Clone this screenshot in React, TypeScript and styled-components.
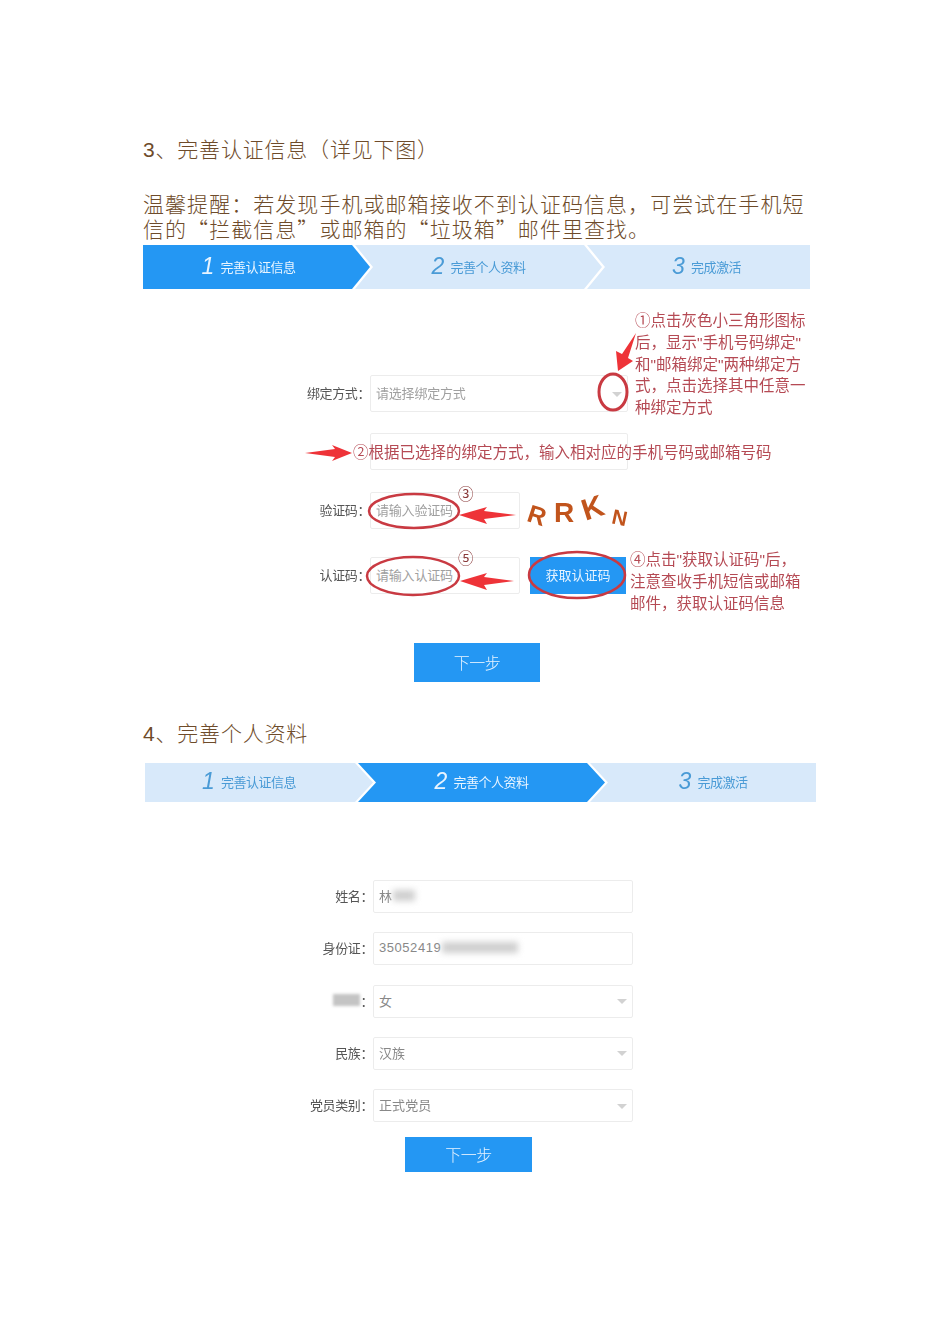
import styled, { createGlobalStyle } from "styled-components";

const GlobalStyle = createGlobalStyle`
  html, body {
    margin: 0;
    padding: 0;
    background: #fff;
  }
`;

const STEP_NAMES = ["完善认证信息", "完善个人资料", "完成激活"];

const Steps = ({
  active,
  height,
  widths,
  pads,
  left,
}: {
  active: number;
  height: number;
  widths: number[];
  pads: number[];
  left: number;
}) => (
  <SSteps $height={height} $left={left}>
    {STEP_NAMES.map((name, i) => (
      <SStep
        key={name}
        $active={i === active}
        $first={i === 0}
        $last={i === 2}
        $width={widths[i]}
        $pad={pads[i]}
      >
        <SStepNum>{i + 1}</SStepNum>
        <SStepName>{name}</SStepName>
      </SStep>
    ))}
  </SSteps>
);

export default function App() {
  return (
    <SPage>
      <GlobalStyle />
      <STitle>3、完善认证信息（详见下图）</STitle>
      <STip>
        温馨提醒：若发现手机或邮箱接收不到认证码信息，可尝试在手机短信的“拦截信息”或邮箱的“垃圾箱”邮件里查找。
      </STip>
      <Steps active={0} height={44} left={0} widths={[227, 247, 223]} pads={[-16, 0, 16]} />

      <SFigure>
        <SRow $gap={21}>
          <SLabel $width={227}>绑定方式：</SLabel>
          <SSelect $width={258} $height={37}>
            <SHolder>请选择绑定方式</SHolder>
          </SSelect>
        </SRow>
        <SRow $gap={22}>
          <SLabel $width={227} />
          <SField $width={258} $height={37} />
        </SRow>
        <SRow $gap={28}>
          <SLabel $width={227}>验证码：</SLabel>
          <SField $width={150} $height={37}>
            <SHolder>请输入验证码</SHolder>
          </SField>
          <SCaptcha>
            <SCaptchaChar $rotate={18} $y={5} $size={25}>R</SCaptchaChar>
            <SCaptchaChar $rotate={0} $y={2} $size={28}>R</SCaptchaChar>
            <SCaptchaChar $rotate={-18} $y={-3} $size={30}>K</SCaptchaChar>
            <SCaptchaChar $rotate={12} $y={7} $size={21}>N</SCaptchaChar>
          </SCaptcha>
        </SRow>
        <SRow $gap={49}>
          <SLabel $width={227}>认证码：</SLabel>
          <SField $width={150} $height={37}>
            <SHolder>请输入认证码</SHolder>
          </SField>
          <SGetCode>获取认证码</SGetCode>
        </SRow>

        <SNextFirst>下一步</SNextFirst>

        <SMarks viewBox="143 289 667 393">
          <ellipse cx="613" cy="392" rx="14" ry="18" fill="none" stroke="#c93a42" strokeWidth="3" />
          <ellipse cx="414" cy="511" rx="45" ry="17" fill="none" stroke="#c93a42" strokeWidth="2.5" />
          <ellipse cx="413" cy="576" rx="46" ry="19" fill="none" stroke="#c93a42" strokeWidth="2.5" />
          <ellipse cx="577" cy="575" rx="48" ry="23" fill="none" stroke="#c93a42" strokeWidth="2.5" />
          <path d="M636 333 L628 358 L633 361 L618 371 L616 351 L622 354 Z" fill="#ee3338" />
          <path d="M305 453 L335 449 L332 445 L352 453 L332 461 L335 457 Z" fill="#ee3338" />
          <path d="M516 515 L484 511 L487 507 L459 515 L487 524 L484 519 Z" fill="#ee3338" />
          <path d="M514 581 L484 577 L487 573 L460 581 L487 590 L484 585 Z" fill="#ee3338" />
        </SMarks>

        <SNoteOne>
          ①点击灰色小三角形图标
          <br />
          后，显示"手机号码绑定"
          <br />
          和"邮箱绑定"两种绑定方
          <br />
          式，点击选择其中任意一
          <br />
          种绑定方式
        </SNoteOne>
        <SNoteTwo>②根据已选择的绑定方式，输入相对应的手机号码或邮箱号码</SNoteTwo>
        <SNoteThree>③</SNoteThree>
        <SNoteFive>⑤</SNoteFive>
        <SNoteFour>
          ④点击"获取认证码"后，
          <br />
          注意查收手机短信或邮箱
          <br />
          邮件，获取认证码信息
        </SNoteFour>
      </SFigure>

      <STitleNext>4、完善个人资料</STitleNext>
      <Steps active={1} height={39} left={2} widths={[228, 247, 226]} pads={[-20, 0, 20]} />

      <SProfile>
        <SProfileRow>
          <SLabel $width={230}>姓名：</SLabel>
          <SField $width={260} $height={33}>
            <SValue>林</SValue>
            <SBlur $width={22} />
          </SField>
        </SProfileRow>
        <SProfileRow>
          <SLabel $width={230}>身份证：</SLabel>
          <SField $width={260} $height={33}>
            <SValue $track={0.55}>35052419</SValue>
            <SBlur $width={76} />
          </SField>
        </SProfileRow>
        <SProfileRow>
          <SLabel $width={230}>
            <SBlurLabel />：
          </SLabel>
          <SSelect $width={260} $height={33}>
            <SValue>女</SValue>
          </SSelect>
        </SProfileRow>
        <SProfileRow>
          <SLabel $width={230}>民族：</SLabel>
          <SSelect $width={260} $height={33}>
            <SValue>汉族</SValue>
          </SSelect>
        </SProfileRow>
        <SProfileRow>
          <SLabel $width={230}>党员类别：</SLabel>
          <SSelect $width={260} $height={33}>
            <SValue>正式党员</SValue>
          </SSelect>
        </SProfileRow>
        <SNextSecond>下一步</SNextSecond>
      </SProfile>
    </SPage>
  );
}

const CJK = `"Liberation Sans", "Noto Sans CJK SC", sans-serif`;

const SPage = styled.div`
  box-sizing: border-box;
  width: 950px;
  height: 1344px;
  padding: 137px 0 0 143px;
  overflow: hidden;
  background: #fff;
  font-family: ${CJK};
`;

const STitle = styled.h2`
  margin: 0;
  font-size: 21px;
  font-weight: 300;
  line-height: 25px;
  letter-spacing: 0.8px;
  color: #6e4b2a;
`;

const STitleNext = styled(STitle)`
  margin-top: 39px;
  margin-bottom: 17px;
`;

const STip = styled.p`
  width: 668px;
  margin: 29px 0 4px;
  font-family: "Noto Sans CJK SC", sans-serif;
  font-size: 21px;
  font-weight: 300;
  line-height: 25px;
  letter-spacing: 1.05px;
  color: #6e4b2a;
`;

const SSteps = styled.div<{ $height: number; $left: number }>`
  display: flex;
  height: ${(p) => p.$height}px;
  margin-left: ${(p) => p.$left}px;
  filter: blur(0.35px);
`;

const SStep = styled.div<{
  $active: boolean;
  $first: boolean;
  $last: boolean;
  $width: number;
  $pad: number;
}>`
  display: flex;
  flex: 0 0 ${(p) => p.$width}px;
  align-items: center;
  justify-content: center;
  gap: 6px;
  margin-right: -15px;
  padding-left: ${(p) => Math.max(p.$pad, 0)}px;
  padding-right: ${(p) => Math.max(-p.$pad, 0)}px;
  padding-bottom: 2px;
  box-sizing: border-box;
  background: ${(p) => (p.$active ? "#2497f3" : "#d8e9fa")};
  color: ${(p) => (p.$active ? "#e8f4ff" : "#4a9bd6")};
  clip-path: polygon(
    0 0,
    ${(p) => (p.$last ? "100% 0, 100% 100%" : "calc(100% - 18px) 0, 100% 50%, calc(100% - 18px) 100%")},
    0 100%${(p) => (p.$first ? "" : ", 18px 50%")}
  );
`;

const SStepNum = styled.span`
  font-family: "Liberation Sans", sans-serif;
  font-size: 23px;
  font-style: italic;
  line-height: 1;
`;

const SStepName = styled.span`
  font-size: 13px;
  letter-spacing: -0.5px;
  color: inherit;
`;

const SFigure = styled.div`
  position: relative;
  width: 667px;
  height: 393px;
  padding-top: 86px;
  box-sizing: border-box;
  filter: blur(0.35px);
`;

const SRow = styled.div<{ $gap: number }>`
  display: flex;
  align-items: center;
  margin-bottom: ${(p) => p.$gap}px;
`;

const SProfile = styled.div`
  padding-top: 78px;
  filter: blur(0.35px);
`;

const SProfileRow = styled.div`
  display: flex;
  align-items: center;
  margin-bottom: 19.3px;
`;

const SLabel = styled.div<{ $width?: number }>`
  display: flex;
  flex: 0 0 ${(p) => p.$width}px;
  justify-content: flex-end;
  align-items: center;
  padding-bottom: 2px;
  box-sizing: border-box;
  font-size: 13px;
  letter-spacing: -0.4px;
  color: #555;
`;

const SField = styled.div<{ $width: number; $height: number }>`
  position: relative;
  display: flex;
  flex: 0 0 ${(p) => p.$width}px;
  align-items: center;
  box-sizing: border-box;
  height: ${(p) => p.$height}px;
  padding: 0 5px 2px;
  border: 1px solid #ececec;
  border-radius: 2px;
  background: #fff;
`;

const SSelect = styled(SField)`
  &::after {
    content: "";
    position: absolute;
    right: 5px;
    top: 50%;
    margin-top: -2px;
    border-left: 5px solid transparent;
    border-right: 5px solid transparent;
    border-top: 5px solid #d2d2d2;
  }
`;

const SHolder = styled.span`
  font-size: 13px;
  letter-spacing: -0.2px;
  color: #a0a0a0;
`;

const SValue = styled.span<{ $track?: number }>`
  font-size: 13px;
  letter-spacing: ${(p) => p.$track ?? 0.1}px;
  color: #888;
`;

const SBlur = styled.span<{ $width: number }>`
  width: ${(p) => p.$width}px;
  height: 11px;
  margin-left: 1px;
  background: #cfcfcf;
  filter: blur(3px);
`;

const SBlurLabel = styled.span`
  width: 27px;
  height: 12px;
  background: #c4c4c4;
  filter: blur(1.5px);
`;

const SCaptcha = styled.div`
  display: flex;
  align-items: center;
  gap: 8px;
  margin-left: 8px;
`;

const SCaptchaChar = styled.span<{ $rotate: number; $y: number; $size: number }>`
  display: inline-block;
  font-family: "Liberation Sans", sans-serif;
  font-size: ${(p) => p.$size}px;
  font-weight: bold;
  color: #c1541c;
  transform: translateY(${(p) => p.$y}px) rotate(${(p) => p.$rotate}deg);
`;

const SGetCode = styled.button`
  width: 96px;
  height: 37px;
  margin-left: 10px;
  padding: 0 0 2px;
  border: 0;
  background: #2497f3;
  font-family: ${CJK};
  font-size: 13px;
  color: #e8f4ff;
`;

const SNext = styled.button`
  display: block;
  padding: 0 0 2px;
  border: 0;
  background: #2497f3;
  font-family: ${CJK};
  font-size: 16px;
  font-weight: 300;
  letter-spacing: -0.5px;
  color: #e8f4ff;
`;

const SNextFirst = styled(SNext)`
  width: 126px;
  height: 39px;
  margin-left: 271px;
`;

const SNextSecond = styled(SNext)`
  width: 127px;
  height: 35px;
  margin-left: 262px;
  margin-top: -4px;
`;

const SMarks = styled.svg`
  position: absolute;
  left: 0;
  top: 0;
  width: 667px;
  height: 393px;
  pointer-events: none;
`;

const SNote = styled.div`
  position: absolute;
  font-size: 15.5px;
  line-height: 21.8px;
  white-space: nowrap;
  color: #b54a54;
`;

const SNoteOne = styled(SNote)`
  left: 492px;
  top: 21px;
`;

const SNoteTwo = styled(SNote)`
  left: 210px;
  top: 153px;
`;

const SNoteThree = styled(SNote)`
  left: 315px;
  top: 195px;
  color: #8a3a3a;
`;

const SNoteFive = styled(SNote)`
  left: 315px;
  top: 259px;
  color: #8a3a3a;
`;

const SNoteFour = styled(SNote)`
  left: 487px;
  top: 260px;
`;
